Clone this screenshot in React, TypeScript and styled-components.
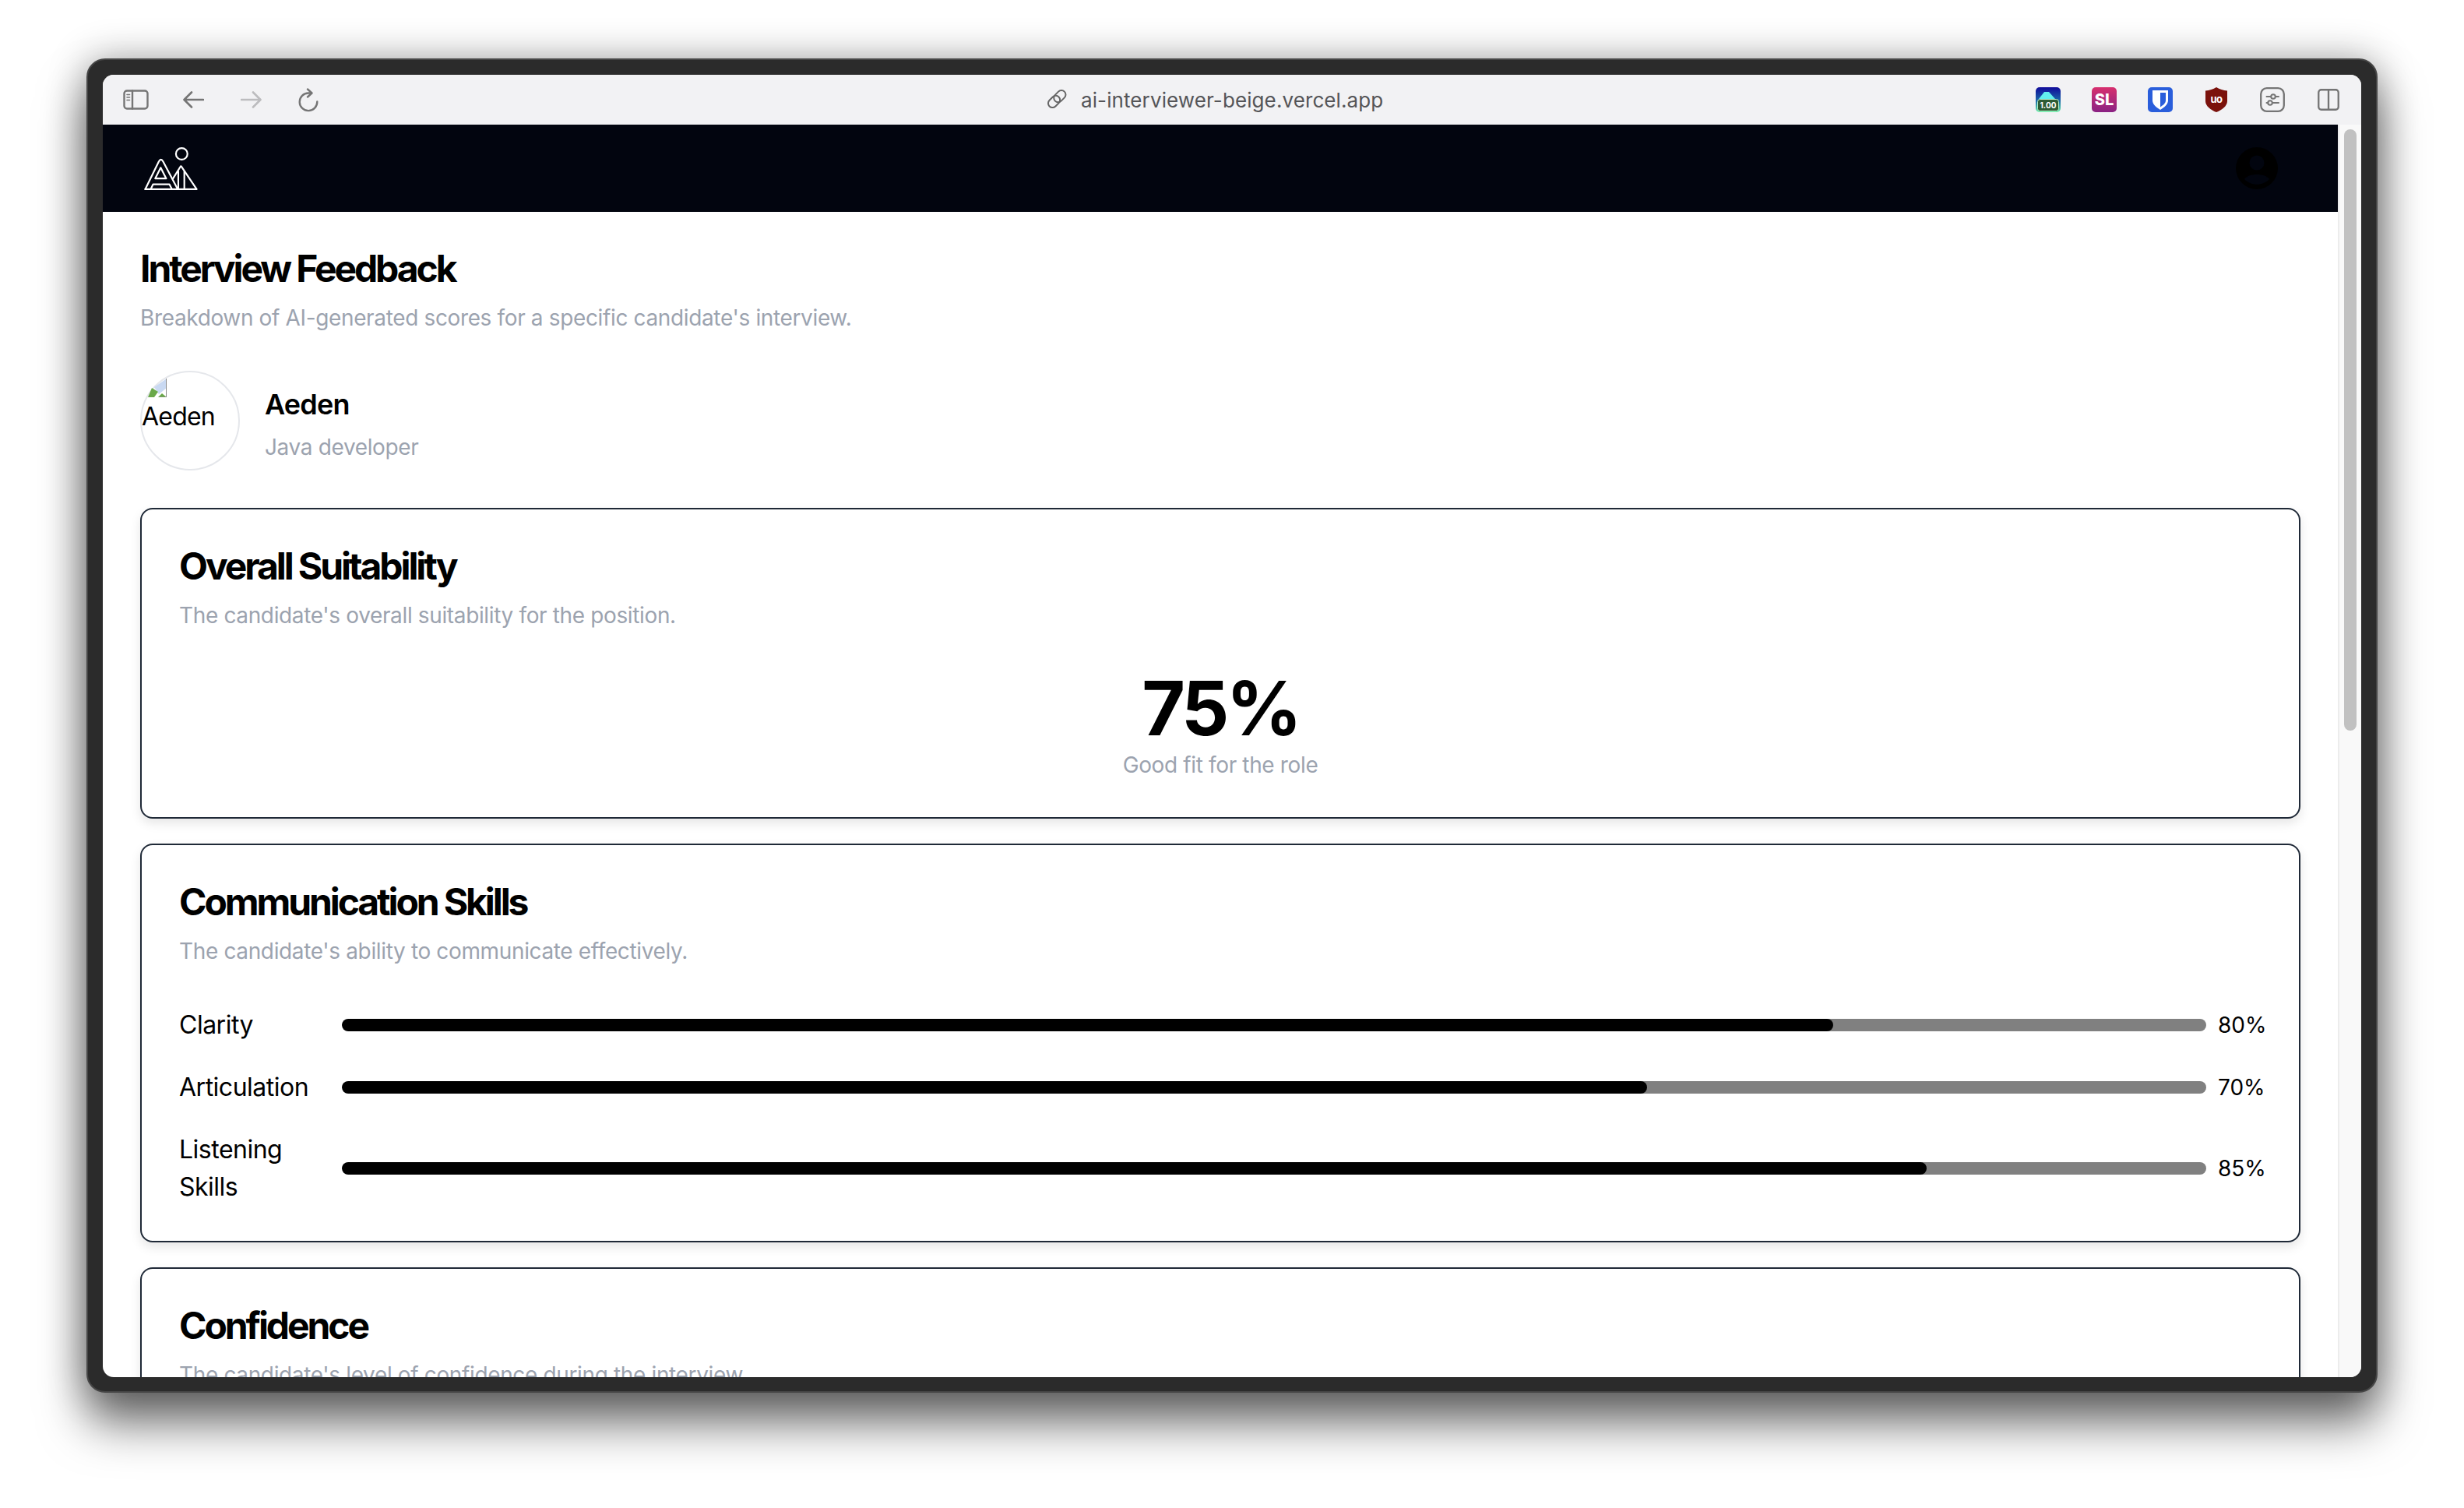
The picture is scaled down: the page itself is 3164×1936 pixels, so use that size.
import React from "react";
import styled, { createGlobalStyle } from "styled-components";

const Global = createGlobalStyle`
  html, body { margin: 0; padding: 0; background: #fff; }
  body { width: 3164px; height: 1936px; overflow: hidden; font-family: Inter, "Liberation Sans", sans-serif; }
  * { box-sizing: border-box; }
`;

const Stage = styled.div`
  width: 3164px;
  height: 1936px;
  padding: 75px 111px 148px 111px;
`;
const Frame = styled.div`
  height: 1713px;
  padding: 19px 19px 18px 19px;
  background: #2b2b2b;
  border: 2px solid #464646;
  border-radius: 24px;
  box-shadow: 0 40px 60px rgba(0, 0, 0, 0.55), 0 0 50px rgba(0, 0, 0, 0.32);
`;
const Screen = styled.div`
  height: 100%;
  background: #fff;
  border-radius: 14px;
  overflow: hidden;
  display: flex;
  flex-direction: column;
`;
const Toolbar = styled.div`
  flex: 0 0 64px;
  background: #f2f2f4;
  display: flex;
  align-items: center;
  padding: 0 28px 0 26px;
`;
const NavCluster = styled.div`
  display: flex;
  align-items: center;
  gap: 47px;
`;
const SidebarSvg = styled.svg`
  margin-right: -3px;
`;
const UrlBar = styled.div`
  display: flex;
  align-items: center;
  gap: 18px;
  margin-left: 935px;
  font-size: 26px;
  color: #555558;
  font-weight: 400;
  letter-spacing: 0.1px;
`;
const Extensions = styled.div`
  margin-left: auto;
  display: flex;
  align-items: center;
  gap: 42px;
`;
const ExtensionGroup = styled.div<{ $gap: number }>`
  display: flex;
  align-items: center;
  gap: ${(p) => p.$gap}px;
`;
const Body = styled.div`
  flex: 1;
  display: flex;
  min-height: 0;
`;
const Viewport = styled.div`
  flex: 1;
  min-width: 0;
  overflow: hidden;
`;
const ScrollTrack = styled.div`
  flex: 0 0 30px;
  background: #f9f9f9;
  border-left: 2px solid #ececec;
  padding: 6px 6px 0 6px;
`;
const ScrollThumb = styled.div`
  height: 772px;
  border-radius: 8px;
  background: #c1c1c1;
`;
const Nav = styled.div`
  height: 112px;
  background: #02050f;
  display: flex;
  align-items: center;
  justify-content: space-between;
  padding: 0 77px 0 52px;
`;
const Main = styled.div`
  padding: 48px;
  color: #000;
`;
const PageTitle = styled.h1`
  margin: 1px 0 0;
  font-size: 48px;
  line-height: 48px;
  font-weight: 700;
  letter-spacing: -3.1px;
`;
const Muted = styled.p`
  margin: 0;
  font-size: 28px;
  line-height: 40px;
  color: #9ca3af;
  letter-spacing: -0.36px;
`;
const PageSub = styled(Muted)`
  margin-top: 19px;
`;
const Candidate = styled.div`
  margin: 48px 0;
  display: flex;
  align-items: center;
  gap: 32px;
`;
const Avatar = styled.div`
  width: 128px;
  height: 128px;
  border-radius: 50%;
  border: 2px solid #e5e7eb;
  padding: 8px 0 0 0;
  font-size: 32px;
  line-height: 38px;
  letter-spacing: -0.8px;
`;
const BrokenImage = styled.svg`
  display: block;
  margin: 0 0 6px 8px;
`;
const CandidateText = styled.div`
  margin-top: 13px;
  display: flex;
  flex-direction: column;
  gap: 15px;
`;
const CandidateName = styled.div`
  font-size: 36px;
  line-height: 40px;
  font-weight: 600;
  letter-spacing: -0.8px;
`;
const Card = styled.section`
  border: 2px solid #1f2937;
  border-radius: 16px;
  padding: 48px 48px 47px;
  margin-bottom: 32px;
  box-shadow: 0 6px 14px rgba(0, 0, 0, 0.1);
`;
const CardTitle = styled.h2`
  margin: 1px 0 0;
  font-size: 48px;
  line-height: 48px;
  font-weight: 700;
  letter-spacing: -3.1px;
`;
const CardSub = styled(Muted)`
  margin-top: 19px;
`;
const Score = styled.div`
  margin-top: 51px;
  display: flex;
  flex-direction: column;
  align-items: center;
  gap: 5px;
`;
const ScoreValue = styled.div`
  font-size: 96px;
  line-height: 96px;
  font-weight: 700;
  letter-spacing: -4px;
`;
const Rows = styled.div`
  margin: 51px 0 -2px;
  display: flex;
  flex-direction: column;
  gap: 32px;
`;
const Row = styled.div`
  display: grid;
  grid-template-columns: 209px 1fr 71px;
  align-items: center;
`;
const RowLabel = styled.div`
  font-size: 32px;
  line-height: 48px;
  width: 176px;
  letter-spacing: -0.5px;
`;
const Track = styled.div`
  height: 16px;
  border-radius: 8px;
  background: #808080;
  overflow: hidden;
`;
const Fill = styled.div`
  height: 100%;
  border-radius: 8px;
  background: #000;
`;
const RowValue = styled.div`
  font-size: 28px;
  padding-left: 15px;
`;

const stroke = { fill: "none", stroke: "#757575", strokeLinecap: "round" as const, strokeLinejoin: "round" as const };

const SidebarIcon = () => (
  <SidebarSvg width="33" height="26" viewBox="0 0 33 26">
    <rect x="1.5" y="1.5" width="30" height="23" rx="3.5" {...stroke} strokeWidth="2.4" />
    <path d="M12 1.5V24.5" {...stroke} strokeWidth="2.4" />
    <path d="M5 6.5H8.5M5 10H8.5M5 13.5H8.5" {...stroke} strokeWidth="1.6" />
  </SidebarSvg>
);
const ArrowIcon = ({ forward }: { forward?: boolean }) => (
  <svg width="27" height="22" viewBox="0 0 27 22">
    <g transform={forward ? "matrix(-1 0 0 1 27 0)" : undefined}>
      <path d="M26 11H2M11 1.5L1.5 11L11 20.5" {...stroke} stroke={forward ? "#bcbcbe" : "#757575"} strokeWidth="2.6" />
    </g>
  </svg>
);
const ReloadIcon = () => (
  <svg width="26" height="31" viewBox="0 0 26 31">
    <path d="M24.3 17.5A11.3 11.3 0 1 1 13 6.5H17" {...stroke} strokeWidth="2.4" />
    <path d="M12 1.5L17.5 6.5L12 11.5" {...stroke} strokeWidth="2.4" />
  </svg>
);
const LinkIcon = () => (
  <svg width="26" height="26" viewBox="0 0 26 26">
    <g {...stroke} stroke="#666" strokeWidth="2">
      <rect x="-1" y="-5.5" width="17" height="11" rx="5.5" transform="translate(8.5 16.5) rotate(-45) translate(-6 0)" />
      <rect x="-1" y="-5.5" width="17" height="11" rx="5.5" transform="translate(16.5 9) rotate(-45) translate(-7 0)" />
    </g>
  </svg>
);
const RateIcon = () => (
  <svg width="32" height="32" viewBox="0 0 32 32">
    <defs>
      <linearGradient id="rateBg" x1="0" y1="0" x2="0" y2="1">
        <stop offset="0" stopColor="#100a9a" />
        <stop offset="0.55" stopColor="#1a6aa8" />
        <stop offset="1" stopColor="#66f0a8" />
      </linearGradient>
    </defs>
    <rect width="32" height="32" rx="5" fill="url(#rateBg)" />
    <path d="M4 15L11 6L17 6L25 15Z" fill="#62f0ee" />
    <rect x="2.5" y="15.5" width="27" height="15" rx="3" fill="#2e5c34" stroke="#b8f0c8" strokeWidth="1" />
    <text x="16" y="27" textAnchor="middle" fontFamily="Inter, sans-serif" fontWeight="700" fontSize="10" fill="#fff">1.00</text>
  </svg>
);
const SimpleLoginIcon = () => (
  <svg width="32" height="32" viewBox="0 0 32 32">
    <defs>
      <linearGradient id="slBg" x1="0" y1="0" x2="0" y2="1">
        <stop offset="0" stopColor="#d72f6e" />
        <stop offset="1" stopColor="#8a2283" />
      </linearGradient>
    </defs>
    <rect width="32" height="32" rx="5" fill="url(#slBg)" />
    <text x="16" y="23" textAnchor="middle" fontFamily="Inter, sans-serif" fontWeight="800" fontSize="20" fill="#fff">SL</text>
  </svg>
);
const BitwardenIcon = () => (
  <svg width="32" height="32" viewBox="0 0 32 32">
    <rect width="32" height="32" rx="5" fill="#2a5edb" />
    <path d="M6 4H26V17C26 22 21 26 16 29C11 26 6 22 6 17Z" fill="#fff" />
    <path d="M16 7H23V17C23 20.5 19.5 23 16 25.5Z" fill="#2a5edb" />
  </svg>
);
const UblockIcon = () => (
  <svg width="28" height="32" viewBox="0 0 28 32">
    <path d="M14 0C18 2.5 23 4 28 4.5V18C28 24 21 29.5 14 32C7 29.5 0 24 0 18V4.5C5 4 10 2.5 14 0Z" fill="#7b120c" />
    <text x="14" y="20" textAnchor="middle" fontFamily="Inter, sans-serif" fontWeight="700" fontSize="13" letterSpacing="-0.5" fill="#fff">uo</text>
  </svg>
);
const SlidersIcon = () => (
  <svg width="32" height="32" viewBox="0 0 32 32">
    <rect x="1.2" y="1.2" width="29.6" height="29.6" rx="7.5" {...stroke} strokeWidth="2.3" />
    <path d="M8.5 12H14M20 12H24M8.5 20H10.5M16 20H24" {...stroke} strokeWidth="2" />
    <circle cx="17" cy="12" r="2.8" {...stroke} strokeWidth="2" />
    <circle cx="13" cy="20" r="2.8" {...stroke} strokeWidth="2" />
  </svg>
);
const PaneIcon = () => (
  <svg width="28" height="28" viewBox="0 0 29 29">
    <rect x="1.3" y="1.3" width="26.4" height="26.4" rx="3.5" {...stroke} strokeWidth="2.4" />
    <path d="M14.5 1.3V27.7" {...stroke} strokeWidth="2.4" />
  </svg>
);
const Logo = () => (
  <svg width="71" height="59" viewBox="285 380 210 175">
    <g fill="none" stroke="#fff" strokeWidth="6.5" strokeLinejoin="round" strokeLinecap="round">
      <circle cx="431" cy="411" r="22" />
      <path d="M292 546L344 440Q352 426 360 440L416 546" />
      <path d="M292 546H488L430 460Q428 456 426 460L398 505" />
      <path d="M351 464L330 505H372Z" />
      <path d="M313 546L322 527H384L394 546" />
      <path d="M418 478V546M441 478V546" />
    </g>
  </svg>
);
const UserIcon = () => (
  <svg width="54" height="54" viewBox="0 0 54 54">
    <circle cx="27" cy="27" r="27" fill="#000" />
    <circle cx="27" cy="20" r="9.5" fill="#02050f" />
    <path d="M11 41C16 33 38 33 43 41C35 50 19 50 11 41Z" fill="#02050f" />
  </svg>
);

const Bar = ({ label, value }: { label: string; value: number }) => (
  <Row>
    <RowLabel>{label}</RowLabel>
    <Track>
      <Fill style={{ width: `${value}%` }} />
    </Track>
    <RowValue>{value}%</RowValue>
  </Row>
);

export default function App() {
  return (
    <Stage>
      <Global />
      <Frame>
        <Screen>
          <Toolbar>
            <NavCluster>
              <SidebarIcon />
              <ArrowIcon />
              <ArrowIcon forward />
              <ReloadIcon />
            </NavCluster>
            <UrlBar>
              <LinkIcon />
              <span>ai-interviewer-beige.vercel.app</span>
            </UrlBar>
            <Extensions>
              <ExtensionGroup $gap={40}>
                <RateIcon />
                <SimpleLoginIcon />
                <BitwardenIcon />
              </ExtensionGroup>
              <ExtensionGroup $gap={42}>
                <UblockIcon />
                <SlidersIcon />
                <PaneIcon />
              </ExtensionGroup>
            </Extensions>
          </Toolbar>
          <Body>
            <Viewport>
              <Nav>
                <Logo />
                <UserIcon />
              </Nav>
              <Main>
                <PageTitle>Interview Feedback</PageTitle>
                <PageSub>Breakdown of AI-generated scores for a specific candidate's interview.</PageSub>
                <Candidate>
                  <Avatar>
                    <BrokenImage width="24" height="24" viewBox="0 0 24 24">
                      <path d="M24 0V12L14 20L8 11Z" fill="#c9d9f2" />
                      <path d="M0 24L5 12L13 17L8 24Z" fill="#6aa84a" />
                      <path d="M13 24L18 19L24 24Z" fill="#6aa84a" />
                      <path d="M23.5 0V24H14" fill="none" stroke="#8a8a8a" strokeWidth="1" />
                    </BrokenImage>
                    Aeden
                  </Avatar>
                  <CandidateText>
                    <CandidateName>Aeden</CandidateName>
                    <Muted>Java developer</Muted>
                  </CandidateText>
                </Candidate>
                <Card>
                  <CardTitle>Overall Suitability</CardTitle>
                  <CardSub>The candidate's overall suitability for the position.</CardSub>
                  <Score>
                    <ScoreValue>75%</ScoreValue>
                    <Muted>Good fit for the role</Muted>
                  </Score>
                </Card>
                <Card>
                  <CardTitle>Communication Skills</CardTitle>
                  <CardSub>The candidate's ability to communicate effectively.</CardSub>
                  <Rows>
                    <Bar label="Clarity" value={80} />
                    <Bar label="Articulation" value={70} />
                    <Bar label="Listening Skills" value={85} />
                  </Rows>
                </Card>
                <Card>
                  <CardTitle>Confidence</CardTitle>
                  <CardSub>The candidate's level of confidence during the interview.</CardSub>
                </Card>
              </Main>
            </Viewport>
            <ScrollTrack>
              <ScrollThumb />
            </ScrollTrack>
          </Body>
        </Screen>
      </Frame>
    </Stage>
  );
}
